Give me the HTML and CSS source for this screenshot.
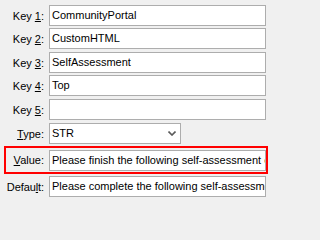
FILE: index.html
```html
<!DOCTYPE html>
<html>
<head>
<meta charset="utf-8">
<link rel="stylesheet" href="styles.css">
</head>
<body>
<div class="form">
  <div class="row r1"><label class="lbl">Key <u>1</u>:</label><div class="field">CommunityPortal</div></div>
  <div class="row r2"><label class="lbl">Key <u>2</u>:</label><div class="field">CustomHTML</div></div>
  <div class="row r3"><label class="lbl">Key <u>3</u>:</label><div class="field">SelfAssessment</div></div>
  <div class="row r4"><label class="lbl">Key <u>4</u>:</label><div class="field">Top</div></div>
  <div class="row r5"><label class="lbl">Key <u>5</u>:</label><div class="field"></div></div>
  <div class="row r6"><label class="lbl"><u>T</u>ype:</label><div class="field select"><span>STR</span><svg class="chev" width="8" height="5" viewBox="0 0 8 5"><path d="M0.5 0.5 L4 4 L7.5 0.5" fill="none" stroke="#5a5a5a" stroke-width="1.6"/></svg></div></div>
  <div class="row highlight"><label class="lbl"><u>V</u>alue:</label><div class="field">Please finish the following self-assessment exam.</div></div>
  <div class="row r8"><label class="lbl">Defau<u>l</u>t:</label><div class="field">Please complete the following self-assessment exam.</div></div>
</div>
</body>
</html>
```
FILE: styles.css
```css
html, body {
  margin: 0;
  padding: 0;
  background: #f0f0f0;
}
body {
  font-family: "Liberation Sans", Arial, sans-serif;
  font-size: 11px;
  color: #000;
  width: 271px;
  height: 202px;
  overflow: hidden;
}
.form {
  padding-top: 5px;
  display: flex;
  flex-direction: column;
}
.row {
  display: flex;
  align-items: center;
  height: 21px;
}
.r1 { margin-bottom: 2px; }
.r2 { margin-bottom: 3px; }
.r3 { margin-bottom: 2px; }
.r4 { margin-bottom: 3px; }
.r5 { margin-bottom: 3px; }
.r6 { margin-bottom: 2px; }
.lbl {
  width: 44px;
  flex: none;
  text-align: right;
  margin-right: 5px;
  white-space: nowrap;
}
.r8 .lbl {
  width: 43px;
  margin-left: 1px;
  letter-spacing: -0.1px;
}
.field {
  box-sizing: border-box;
  width: 217px;
  height: 21px;
  flex: none;
  background: #fff;
  border: 1px solid #adadad;
  padding: 0 2px;
  line-height: 19px;
  white-space: nowrap;
  overflow: hidden;
}
.select {
  width: 132px;
  display: flex;
  align-items: center;
  justify-content: space-between;
  padding-right: 4px;
}
.chev {
  display: block;
}
.highlight {
  box-sizing: border-box;
  height: 28px;
  margin-left: 4px;
  width: 264px;
  border: 2px solid #f00;
  padding: 2px 1px 2px 0;
  margin-bottom: 2px;
}
.highlight .lbl {
  width: 38px;
}
```
